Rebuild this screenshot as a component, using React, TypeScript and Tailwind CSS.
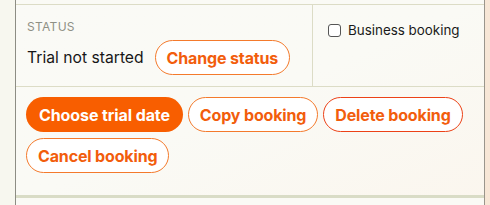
import React from "react";

const font = { fontFamily: "Inter, 'Noto Sans', sans-serif" };

function OutlineBtn({ children, red }: { children: React.ReactNode; red?: boolean }) {
  return (
    <button
      className={
        "h-[35px] rounded-full border bg-white px-[11px] text-[16px] font-bold leading-none tracking-[-0.15px] " +
        (red ? "border-[#ec4217] text-[#f25d0c]" : "border-[#f47a2c] text-[#f25d0c]")
      }
    >
      {children}
    </button>
  );
}

export default function App() {
  return (
    <div className="flex h-[205px] w-[490px] overflow-hidden bg-[#f7f7ef]" style={font}>
      <div className="w-[15px] shrink-0 bg-[#f7f7ef]" />
      <div className="w-px shrink-0 bg-[#8d8d84]" />
      <div className="flex w-[468px] shrink-0 flex-col bg-gradient-to-br from-[#fafaf6] via-[#fafaf5] to-[#fbf6ee]">
        <div className="h-[4px] bg-[#fafaf5]" />
        <div className="h-px bg-[#dcdcc6]" />
        <div className="flex h-[82px] border-b border-[#dcdcc6]">
          <div className="flex w-[297px] flex-col border-r border-[#dcdcc6] pl-[11px] pt-[15px]">
            <div className="text-[12px] leading-[14px] tracking-[0.3px] text-[#8f9085]">STATUS</div>
            <div className="mt-[6px] flex items-center gap-[11px]">
              <span className="text-[15.7px] text-[#161616]">Trial not started</span>
              <OutlineBtn>Change status</OutlineBtn>
            </div>
          </div>
          <div className="flex-1 pl-[15px] pt-[15px]">
            <label className="flex items-center gap-[7px] text-[13.4px] text-[#1a1a1a]">
              <span className="inline-block h-[13px] w-[13px] rounded-[3px] border border-[#555] bg-white" />
              Business booking
            </label>
          </div>
        </div>
        <div className="flex flex-1 flex-wrap content-start gap-x-[5px] gap-y-[6px] pl-[10px] pr-[10px] pt-[10px]">
          <button className="h-[35px] rounded-full bg-[#f85e00] px-[13px] text-[16px] font-bold leading-none tracking-[-0.1px] text-white">
            Choose trial date
          </button>
          <OutlineBtn>Copy booking</OutlineBtn>
          <OutlineBtn red>Delete booking</OutlineBtn>
          <OutlineBtn>Cancel booking</OutlineBtn>
        </div>
        <div className="h-[3px] bg-[#d9dcc6]" />
        <div className="h-[7px] bg-[#fafaf5]" />
      </div>
      <div className="w-px shrink-0 bg-[#9a958c]" />
      <div className="flex-1 bg-[#f7e6d6]" />
    </div>
  );
}
